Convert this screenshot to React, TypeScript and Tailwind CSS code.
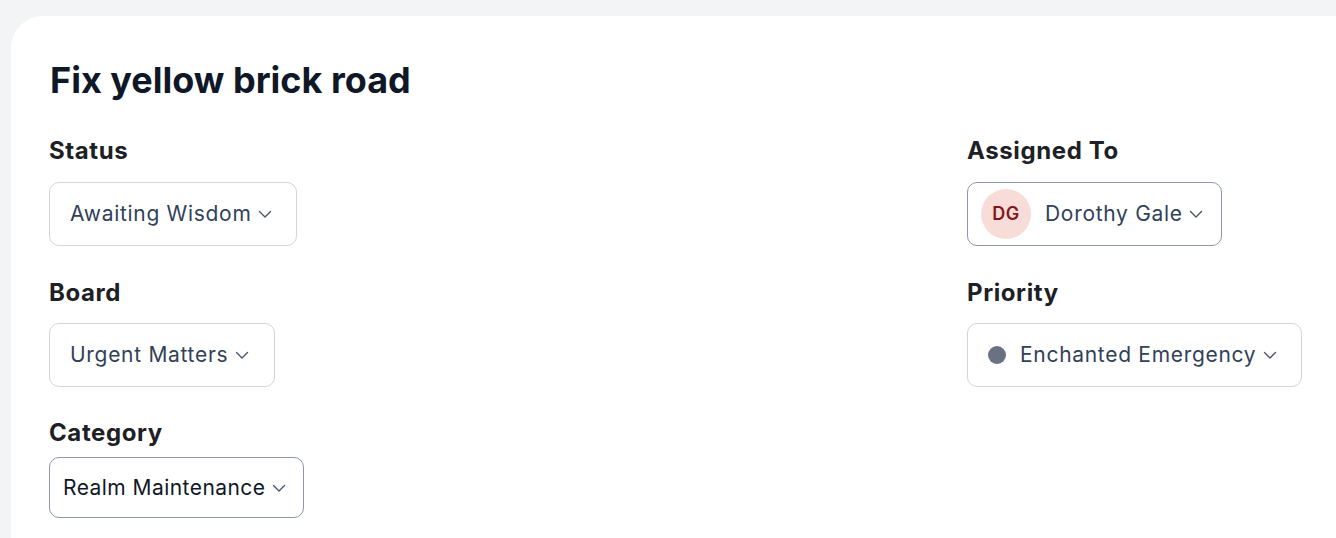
import React from "react";

const Chevron = () => (
  <svg width="16" height="16" viewBox="0 0 16 16" fill="none" className="shrink-0 text-gray-600">
    <path d="M2.5 5.5l5.5 5.5 5.5-5.5" stroke="currentColor" strokeWidth="1.4" strokeLinecap="round" strokeLinejoin="round" />
  </svg>
);

const Label = ({ children }: { children: React.ReactNode }) => (
  <div className="text-2xl leading-8 font-bold tracking-[0.6px] text-[#1d2025]">{children}</div>
);

const App = () => {
  return (
    <div className="min-h-screen bg-[#f3f4f6] pl-[11px] pt-4 font-['Inter','Liberation_Sans',sans-serif]">
      <div className="min-h-[530px] rounded-tl-[32px] bg-white pl-[38px] pt-[44px]">
        <h1 className="ml-px text-4xl leading-10 font-bold text-gray-900">Fix yellow brick road</h1>

        <div className="mt-[35px] flex">
          {/* left column */}
          <div className="flex w-[918px] flex-col items-start">
            <Label>Status</Label>
            <button className="mt-[15px] inline-flex h-16 items-center gap-[6px] rounded-[10px] border border-gray-300 bg-white pl-5 pr-[23px] text-[21px] tracking-[0.7px] text-slate-700">
              Awaiting Wisdom
              <Chevron />
            </button>

            <div className="mt-[31px]">
              <Label>Board</Label>
            </div>
            <button className="mt-[14px] inline-flex h-16 items-center gap-[6px] rounded-[10px] border border-gray-300 bg-white pl-5 pr-6 text-[21px] tracking-[0.7px] text-slate-700">
              Urgent Matters
              <Chevron />
            </button>

            <div className="mt-[30px]">
              <Label>Category</Label>
            </div>
            <button className="mt-2 inline-flex h-[61px] items-center gap-[5px] rounded-[10px] border border-[#8e98aa] bg-white pl-[13px] pr-4 text-[21px] tracking-[0.45px] text-gray-900">
              Realm Maintenance
              <Chevron />
            </button>
          </div>

          {/* right column */}
          <div className="flex flex-col items-start">
            <Label>Assigned To</Label>
            <button className="mt-[15px] inline-flex h-16 items-center rounded-[10px] border border-[#8e98aa] bg-white pl-[13px] pr-[17px] text-[21px] tracking-[0.7px] text-slate-700">
              <span className="flex h-[50px] w-[50px] items-center justify-center rounded-full bg-[#f8dcd8] text-lg font-semibold tracking-[0.5px] text-red-900">
                DG
              </span>
              <span className="ml-[14px]">Dorothy Gale</span>
              <span className="ml-[5px]">
                <Chevron />
              </span>
            </button>

            <div className="mt-[31px]">
              <Label>Priority</Label>
            </div>
            <button className="mt-[14px] inline-flex h-16 items-center rounded-[10px] border border-gray-300 bg-white pl-5 pr-[23px] text-[21px] tracking-[0.7px] text-slate-700">
              <span className="h-[18px] w-[18px] rounded-full bg-gray-500" />
              <span className="ml-[14px]">Enchanted Emergency</span>
              <span className="ml-[6px]">
                <Chevron />
              </span>
            </button>
          </div>
        </div>
      </div>
    </div>
  );
};

export default App;
